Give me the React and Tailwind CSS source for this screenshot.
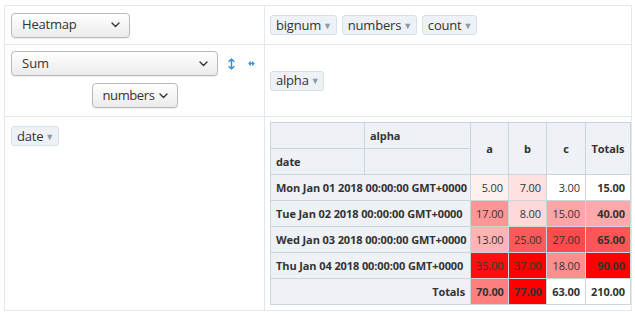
import React from 'react';

const FONT = { fontFamily: '"Open Sans", "Noto Sans", sans-serif' };

// escala roja como la del heatmap de pivottable
const heat = (x, min, max) => {
  const n = 255 - Math.round((255 * (x - min)) / (max - min));
  return `rgb(255,${n},${n})`;
};

const rows = [
  { label: 'Mon Jan 01 2018 00:00:00 GMT+0000', vals: [5, 7, 3], total: 15 },
  { label: 'Tue Jan 02 2018 00:00:00 GMT+0000', vals: [17, 8, 15], total: 40 },
  { label: 'Wed Jan 03 2018 00:00:00 GMT+0000', vals: [13, 25, 27], total: 65 },
  { label: 'Thu Jan 04 2018 00:00:00 GMT+0000', vals: [35, 37, 18], total: 90 },
];
const colTotals = [70, 77, 63];

const Chevron = () => (
  <svg width="9" height="6" viewBox="0 0 9 6" className="shrink-0">
    <path d="M1 1l3.5 3.5L8 1" fill="none" stroke="#333" strokeWidth="1.4" strokeLinecap="round" strokeLinejoin="round" />
  </svg>
);

const Select = ({ label, className }) => (
  <div
    className={`h-[25px] flex items-center justify-between pl-[10px] pr-[9px] rounded-[4px] border border-[#b9b9b9] bg-gradient-to-b from-white to-[#ebebeb] shadow-[0_1px_1px_rgba(0,0,0,0.08)] text-[13px] text-[#333] ${className}`}
  >
    <span>{label}</span>
    <Chevron />
  </div>
);

const Chip = ({ label }) => (
  <div className="h-[20px] flex items-center gap-[2px] pl-[5px] pr-[4px] rounded-[3px] border border-[#d9dfe6] bg-[#eef1f5] text-[13px] tracking-[-0.2px] text-[#333] leading-none">
    <span>{label}</span>
    <span className="text-[9px] text-[#8a9bab]">▼</span>
  </div>
);

const th = 'bg-[#eef1f5] border border-[#ccd4dc] font-bold px-[5px] text-[#333] overflow-hidden';
const td = 'border border-[#ccd4dc] px-[5px] text-right text-[#333]';

const App = () => {
  return (
    <div className="w-[635px] h-[315px] bg-white pt-[5px] pl-[4px]" style={FONT}>
      <div className="w-[628px] h-[306px] grid grid-cols-[259px_366px] grid-rows-[38px_71px_193px] gap-px p-px bg-[#e3e8ee]">
        {/* renderer */}
        <div className="bg-white flex items-center pl-[6px]">
          <Select label="Heatmap" className="w-[119px] tracking-[-0.2px]" />
        </div>

        {/* atributos sin usar */}
        <div className="bg-white flex items-center gap-[5px] pl-[5px]">
          <Chip label="bignum" />
          <Chip label="numbers" />
          <Chip label="count" />
        </div>

        {/* agregador */}
        <div className="bg-white flex flex-col pt-[6px] pl-[6px]">
          <div className="flex items-center">
            <Select label="Sum" className="w-[207px]" />
            <svg width="7" height="12" viewBox="0 0 7 12" className="ml-[10px]">
              <path d="M3.5 1v10M1 3.5L3.5 1 6 3.5M1 8.5L3.5 11 6 8.5" fill="none" stroke="#2f8fe0" strokeWidth="1.4" strokeLinecap="round" strokeLinejoin="round" />
            </svg>
            <svg width="7" height="5" viewBox="0 0 7 5" className="ml-[13px]">
              <path d="M1 2.5h5M2.5 1L1 2.5 2.5 4M4.5 1L6 2.5 4.5 4" fill="none" stroke="#2f8fe0" strokeWidth="1.2" strokeLinecap="round" strokeLinejoin="round" />
            </svg>
          </div>
          <div className="flex justify-center pr-[6px] mt-[7px]">
            <Select label="numbers" className="w-[86px] pl-[9px] pr-[8px] tracking-[-0.4px]" />
          </div>
        </div>

        {/* columnas */}
        <div className="bg-white flex items-center pl-[5px]">
          <Chip label="alpha" />
        </div>

        {/* filas */}
        <div className="bg-white flex items-start pt-[9px] pl-[6px]">
          <Chip label="date" />
        </div>

        {/* tabla */}
        <div className="bg-white pt-[5px] pl-[5px]">
          <table className="table-fixed w-[360px] border-collapse text-[11px] tracking-[-0.1px] leading-none">
            <colgroup>
              <col className="w-[94px]" />
              <col className="w-[106px]" />
              <col className="w-[38px]" />
              <col className="w-[38px]" />
              <col className="w-[39px]" />
              <col className="w-[45px]" />
            </colgroup>
            <thead>
              <tr className="h-[26px]">
                <th className={th} />
                <th className={`${th} text-left`}>alpha</th>
                <th className={`${th} text-center`} rowSpan={2}>a</th>
                <th className={`${th} text-center`} rowSpan={2}>b</th>
                <th className={`${th} text-center`} rowSpan={2}>c</th>
                <th className={`${th} text-center`} rowSpan={2}>Totals</th>
              </tr>
              <tr className="h-[26px]">
                <th className={`${th} text-left`}>date</th>
                <th className={th} />
              </tr>
            </thead>
            <tbody>
              {rows.map((r) => (
                <tr key={r.label} className="h-[26px]">
                  <th className={`${th} text-left whitespace-nowrap`} colSpan={2}>{r.label}</th>
                  {r.vals.map((v, i) => (
                    <td key={i} className={td} style={{ backgroundColor: heat(v, 3, 37) }}>
                      {v.toFixed(2)}
                    </td>
                  ))}
                  <td className={`${td} font-bold`} style={{ backgroundColor: heat(r.total, 15, 90) }}>
                    {r.total.toFixed(2)}
                  </td>
                </tr>
              ))}
              <tr className="h-[26px]">
                <th className={`${th} text-right`} colSpan={2}>Totals</th>
                {colTotals.map((v, i) => (
                  <td key={i} className={`${td} font-bold`} style={{ backgroundColor: heat(v, 63, 77) }}>
                    {v.toFixed(2)}
                  </td>
                ))}
                <td className={`${td} font-bold bg-white`}>210.00</td>
              </tr>
            </tbody>
          </table>
        </div>
      </div>
    </div>
  );
};

export default App;
